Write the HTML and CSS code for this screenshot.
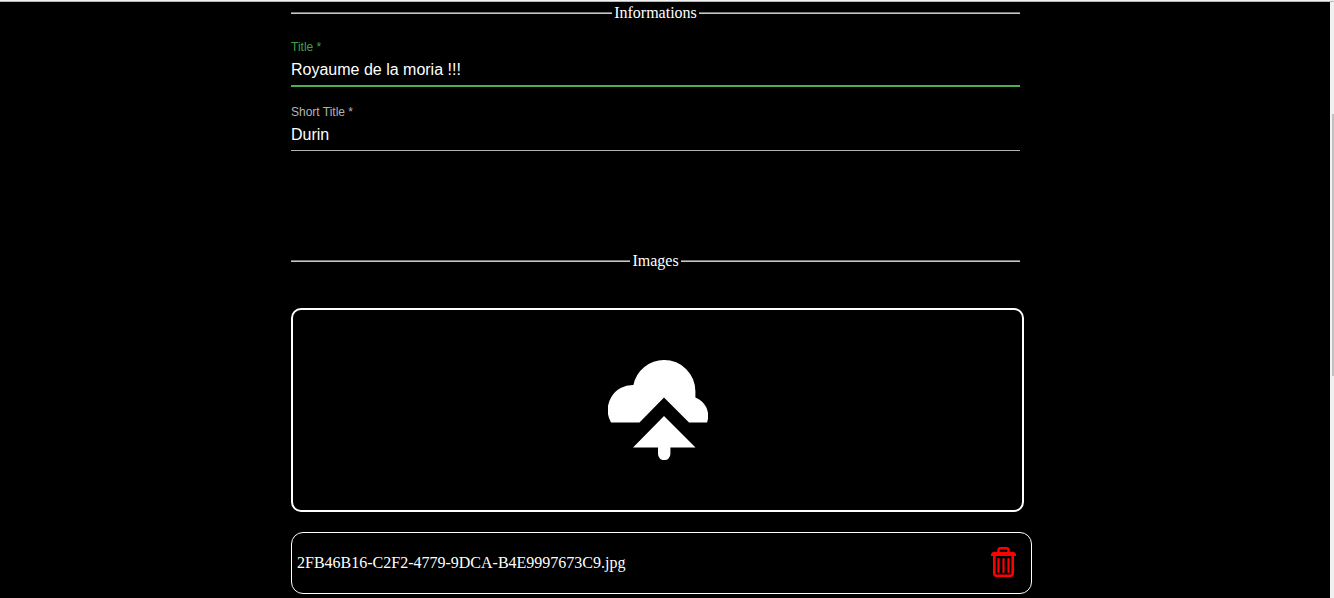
FILE: index.html
```html
<!DOCTYPE html>
<html lang="en">
<head>
<meta charset="utf-8">
<title>Edit</title>
<link rel="stylesheet" href="styles.css">
</head>
<body>
<div class="page">
  <main class="content">
    <form class="form">
      <h2 class="divider">Informations</h2>
      <div class="field field-active">
        <label for="title">Title *</label>
        <input id="title" type="text" value="Royaume de la moria !!!">
      </div>
      <div class="field">
        <label for="short-title">Short Title *</label>
        <input id="short-title" type="text" value="Durin">
      </div>
      <h2 class="divider divider-images">Images</h2>
      <button class="upload" type="button" aria-label="Upload images">
        <svg width="100" height="100" viewBox="0 0 100 100" fill="currentColor" aria-hidden="true">
          <path d="M3 62.5A25 25 0 0 1 25.4 25A31.2 31.2 0 0 1 56.2 0A31.2 31.2 0 0 1 87.4 31.2V37.5A19.5 19.5 0 0 1 99 62.5H81L56 37.5L31.5 62.5Z"/>
          <path d="M56 56L87.5 87.5H62.4V94A6.2 6.2 0 0 1 50 94V87.5H25Z"/>
        </svg>
      </button>
      <div class="file">
        <span class="file-name">2FB46B16-C2F2-4779-9DCA-B4E9997673C9.jpg</span>
        <button class="delete" type="button" aria-label="Delete file">
          <svg width="26" height="30" viewBox="0 0 26 30" fill="none" stroke="currentColor" aria-hidden="true">
            <path d="M7.5 5V3.2Q7.5 1.2 9.5 1.2H15.5Q17.5 1.2 17.5 3.2V5" stroke-width="2.4"/>
            <path d="M2 4.8H23L25 7V9H0V7Z" fill="currentColor" stroke="none"/>
            <path d="M3.3 8V26.3Q3.3 28.8 5.8 28.8H19.2Q21.7 28.8 21.7 26.3V8" stroke-width="2.6"/>
            <path d="M7.5 12V25M12.5 12V25M17.5 12V25" stroke-width="2.2" stroke-linecap="round"/>
          </svg>
        </button>
      </div>
    </form>
  </main>
  <div class="scroll-track"><div class="scroll-thumb"></div></div>
</div>
</body>
</html>
```
FILE: styles.css
```css
body {
  margin: 0;
  box-sizing: border-box;
  min-height: 100vh;
  display: flex;
  border-top: 1px solid #f1f1f1;
  background: #000;
  color: #fff;
  font: 16px/18px "Liberation Serif", "Times New Roman", serif;
}

.page {
  display: flex;
  flex: 1;
  min-width: 0;
  border-top: 1px solid #b5b8b8;
}

.content {
  flex: 1;
  min-width: 0;
}

.form {
  margin: 0 310px 0 291px;
}

.divider {
  display: flex;
  align-items: center;
  gap: 2px;
  margin: 2px 0 0;
  font-size: 16px;
  font-weight: 400;
}

.divider::before,
.divider::after {
  content: "";
  flex: 1;
  border-top: 1px solid #767676;
  border-bottom: 1px solid #c8c8c8;
}

.divider-images {
  margin: 101px 0 38px;
}

.field {
  display: flex;
  flex-direction: column;
  margin-top: 16px;
  border-bottom: 1px solid #b3b3b3;
  font-family: "Liberation Sans", Arial, sans-serif;
}

.field label {
  color: #b3b3b3;
  font-size: 12px;
  line-height: 18px;
}

.field input {
  width: 100%;
  height: 29px;
  padding: 0 0 2px;
  box-sizing: border-box;
  border: 0;
  outline: 0;
  background: none;
  color: #fff;
  font: inherit;
  font-size: 16px;
}

.field-active {
  border-bottom: 2px solid #4caf50;
}

.field-active label {
  color: #43a047;
}

.upload {
  display: flex;
  align-items: center;
  justify-content: center;
  width: calc(100% + 4px);
  height: 204px;
  padding: 0;
  border: 2px solid #fff;
  border-radius: 10px;
  background: none;
  color: #fff;
}

.file {
  display: flex;
  align-items: center;
  justify-content: space-between;
  width: 100%;
  height: 60px;
  margin-top: 20px;
  padding: 0 5px;
  border: 1px solid #fff;
  border-radius: 12px;
}

.delete {
  display: flex;
  padding: 0 9px 2px;
  border: 0;
  background: none;
  color: #f00;
}

.scroll-track {
  width: 4px;
  background: #f1f1f1;
}

.scroll-thumb {
  height: 262px;
  margin: 112px 0 0 2px;
  background: #c1c1c1;
}
```
